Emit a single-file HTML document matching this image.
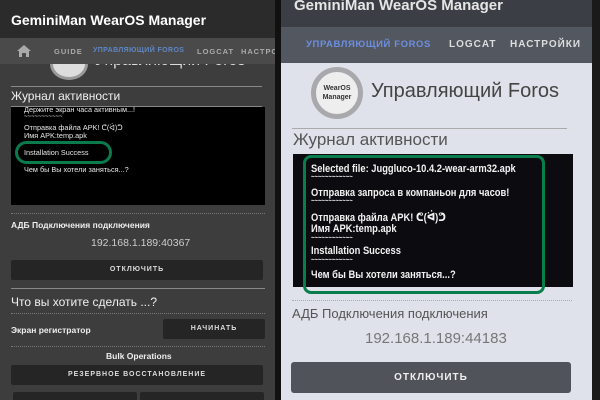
<!DOCTYPE html>
<html><head><meta charset="utf-8"><style>
*{margin:0;padding:0;box-sizing:border-box}
body{width:600px;height:400px;overflow:hidden;position:relative;background:#111;font-family:"Liberation Sans","DejaVu Sans",sans-serif}
.a{position:absolute;white-space:nowrap}
.L{left:0;top:0;width:275px;height:400px;background:#3d3d3d;overflow:hidden}
.R{left:281px;top:0;width:311px;height:400px;background:#dfe2ea;overflow:hidden}
.btn{position:absolute;background:#252525;color:#ddd;font-size:7px;font-weight:bold;letter-spacing:1px;text-align:center;border-radius:2px}
.dot{position:absolute;border-top:1px dotted #777;height:0}
.lt{color:#e8e8e8;font-size:7.3px}
.rt{color:#f2f2f2;font-size:11px;font-weight:bold;transform:scaleX(0.85);transform-origin:0 0}
.tab{color:#aaa;font-size:7.5px;font-weight:bold;letter-spacing:1px;z-index:2}
</style></head><body>
<div class="a L">
 <div class="a" style="left:0;top:0;width:275px;height:38px;background:#2b2b2b"></div>
 <div class="a" style="left:11px;top:12px;color:#fff;font-size:14px;font-weight:bold">GeminiMan WearOS Manager</div>
 <div class="a" style="left:50px;top:48px;width:38px;height:32px;border-radius:50%;background:#ddd;border:3px solid #999"></div>
 <div class="a" style="left:95px;top:52px;color:#ddd;font-size:16px">Управляющий Foros</div>
 <div class="a" style="left:0;top:38px;width:275px;height:26px;background:#4a4a4a;z-index:1"></div>
 <svg class="a" style="left:16px;top:44px;z-index:2" width="16" height="13" viewBox="0 0 16 13"><path d="M1 7L8 1L15 7H13V13H10V9H6V13H3V7Z" fill="#aaa"/></svg>
 <div class="a tab" style="left:54px;top:47px">GUIDE</div>
 <div class="a tab" style="left:93px;top:47px;color:#5f86c4;font-size:7px;letter-spacing:.4px">УПРАВЛЯЮЩИЙ FOROS</div>
 <div class="a tab" style="left:197px;top:47px">LOGCAT</div>
 <div class="a tab" style="left:241px;top:47px">НАСТРОЙ</div>
 <div class="a" style="left:11px;top:86px;width:251px;height:1px;background:#888"></div>
 <div class="a" style="left:11px;top:89px;color:#f0f0f0;font-size:12px">Журнал активности</div>
 <div class="a" style="left:11px;top:106px;width:251px;height:1px;background:#888"></div>
 <div class="a" style="left:11px;top:107px;width:254px;height:98px;background:#000"></div>
 <div class="a lt" style="left:24px;top:105px">Держите экран часа активным...!</div>
 <div class="a lt" style="left:24px;top:114px;font-size:6px">~~~~~~~~~~~</div>
 <div class="a lt" style="left:24px;top:123px">Отправка файла APK! ᕦ(ᐛ)ᕤ</div>
 <div class="a lt" style="left:24px;top:131px">Имя APK:temp.apk</div>
 <div class="a lt" style="left:24px;top:140px;font-size:6px">~~~~~~~~~~~</div>
 <div class="a lt" style="left:24px;top:148px">Installation Success</div>
 <div class="a lt" style="left:24px;top:165px">Чем бы Вы хотели заняться...?</div>
 <div class="a" style="left:15px;top:141px;width:97px;height:23px;border:3px solid #0b7a4c;border-radius:12px"></div>
 <div class="dot" style="left:11px;top:213px;width:254px"></div>
 <div class="a" style="left:11px;top:220px;color:#eee;font-size:8.5px;font-weight:bold">АДБ Подключения подключения</div>
 <div class="a" style="left:91px;top:237px;color:#ccc;font-size:10.5px">192.168.1.189:40367</div>
 <div class="btn" style="left:11px;top:260px;width:252px;height:20px;line-height:20px">ОТКЛЮЧИТЬ</div>
 <div class="a" style="left:11px;top:288px;width:254px;height:1px;background:#888"></div>
 <div class="a" style="left:11px;top:295px;color:#f0f0f0;font-size:12px">Что вы хотите сделать ...?</div>
 <div class="dot" style="left:11px;top:313px;width:254px"></div>
 <div class="a" style="left:11px;top:325px;color:#eee;font-size:8.5px;font-weight:bold">Экран регистратор</div>
 <div class="btn" style="left:163px;top:319px;width:102px;height:20px;line-height:20px">НАЧИНАТЬ</div>
 <div class="dot" style="left:11px;top:346px;width:254px"></div>
 <div class="a" style="left:106px;top:351px;color:#eee;font-size:8.5px;font-weight:bold">Bulk Operations</div>
 <div class="btn" style="left:11px;top:365px;width:252px;height:20px;line-height:20px">РЕЗЕРВНОЕ ВОССТАНОВЛЕНИЕ</div>
 <div class="btn" style="left:13px;top:392px;width:124px;height:12px"></div>
 <div class="btn" style="left:140px;top:392px;width:124px;height:12px"></div>
</div>
<div class="a R">
 <div class="a" style="left:0;top:0;width:311px;height:27px;background:#3b3e45"></div>
 <div class="a" style="left:13px;top:-3px;color:#e6e6e6;font-size:15px;font-weight:bold">GeminiMan WearOS Manager</div>
 <div class="a" style="left:0;top:27px;width:311px;height:36px;background:#53575f"></div>
 <div class="a" style="left:25px;top:39px;color:#6d8fe0;font-size:9.5px;font-weight:bold;letter-spacing:.6px">УПРАВЛЯЮЩИЙ FOROS</div>
 <div class="a" style="left:168px;top:39px;color:#ddd;font-size:10px;font-weight:bold;letter-spacing:1px">LOGCAT</div>
 <div class="a" style="left:229px;top:39px;color:#ddd;font-size:10px;font-weight:bold;letter-spacing:1px">НАСТРОЙКИ</div>
 <div class="a" style="left:30px;top:67px;width:52px;height:52px;border-radius:50%;background:#eee;border:5px solid #a9a9ad"></div>
 <div class="a" style="left:39px;top:84px;color:#333;font-size:7px;font-weight:bold;text-align:center;width:34px;line-height:9px">WearOS<br>Manager</div>
 <div class="a" style="left:90px;top:80px;color:#444;font-size:20px">Управляющий Foros</div>
 <div class="a" style="left:11px;top:128px;width:275px;height:1px;background:#aaa"></div>
 <div class="a" style="left:12px;top:130px;color:#555;font-size:17px">Журнал активности</div>
 <div class="a" style="left:12px;top:154px;width:280px;height:133px;background:#0c0c10"></div>
 <div class="a" style="left:22px;top:155px;width:242px;height:139px;border:3px solid #0a7d4c;border-radius:8px"></div>
 <div class="a rt" style="left:30px;top:163px">Selected file: Juggluco-10.4.2-wear-arm32.apk</div>
 <div class="a rt" style="left:30px;top:174px;font-size:7px">~~~~~~~~~~~~</div>
 <div class="a rt" style="left:30px;top:187px">Отправка запроса в компаньон для часов!</div>
 <div class="a rt" style="left:30px;top:198px;font-size:7px">~~~~~~~~~~~~</div>
 <div class="a rt" style="left:30px;top:211px">Отправка файла APK! ᕦ(ᐛ)ᕤ</div>
 <div class="a rt" style="left:30px;top:223px">Имя APK:temp.apk</div>
 <div class="a rt" style="left:30px;top:235px;font-size:7px">~~~~~~~~~~~~</div>
 <div class="a rt" style="left:30px;top:245px">Installation Success</div>
 <div class="a rt" style="left:30px;top:257px;font-size:7px">~~~~~~~~~~~~</div>
 <div class="a rt" style="left:30px;top:269px">Чем бы Вы хотели заняться...?</div>
 <div class="dot" style="left:11px;top:300px;width:280px;border-color:#aaa"></div>
 <div class="a" style="left:11px;top:306px;color:#555;font-size:13px">АДБ Подключения подключения</div>
 <div class="a" style="left:84px;top:330px;color:#777;font-size:15px">192.168.1.189:44183</div>
 <div class="a" style="left:10px;top:362px;width:280px;height:31px;background:#505359;border-radius:3px;color:#eee;font-size:10px;font-weight:bold;text-align:center;line-height:31px;letter-spacing:1px">ОТКЛЮЧИТЬ</div>
</div>
<div class="a" style="left:592px;top:0;width:8px;height:400px;background:#1a1a1a"></div>
</body></html>
